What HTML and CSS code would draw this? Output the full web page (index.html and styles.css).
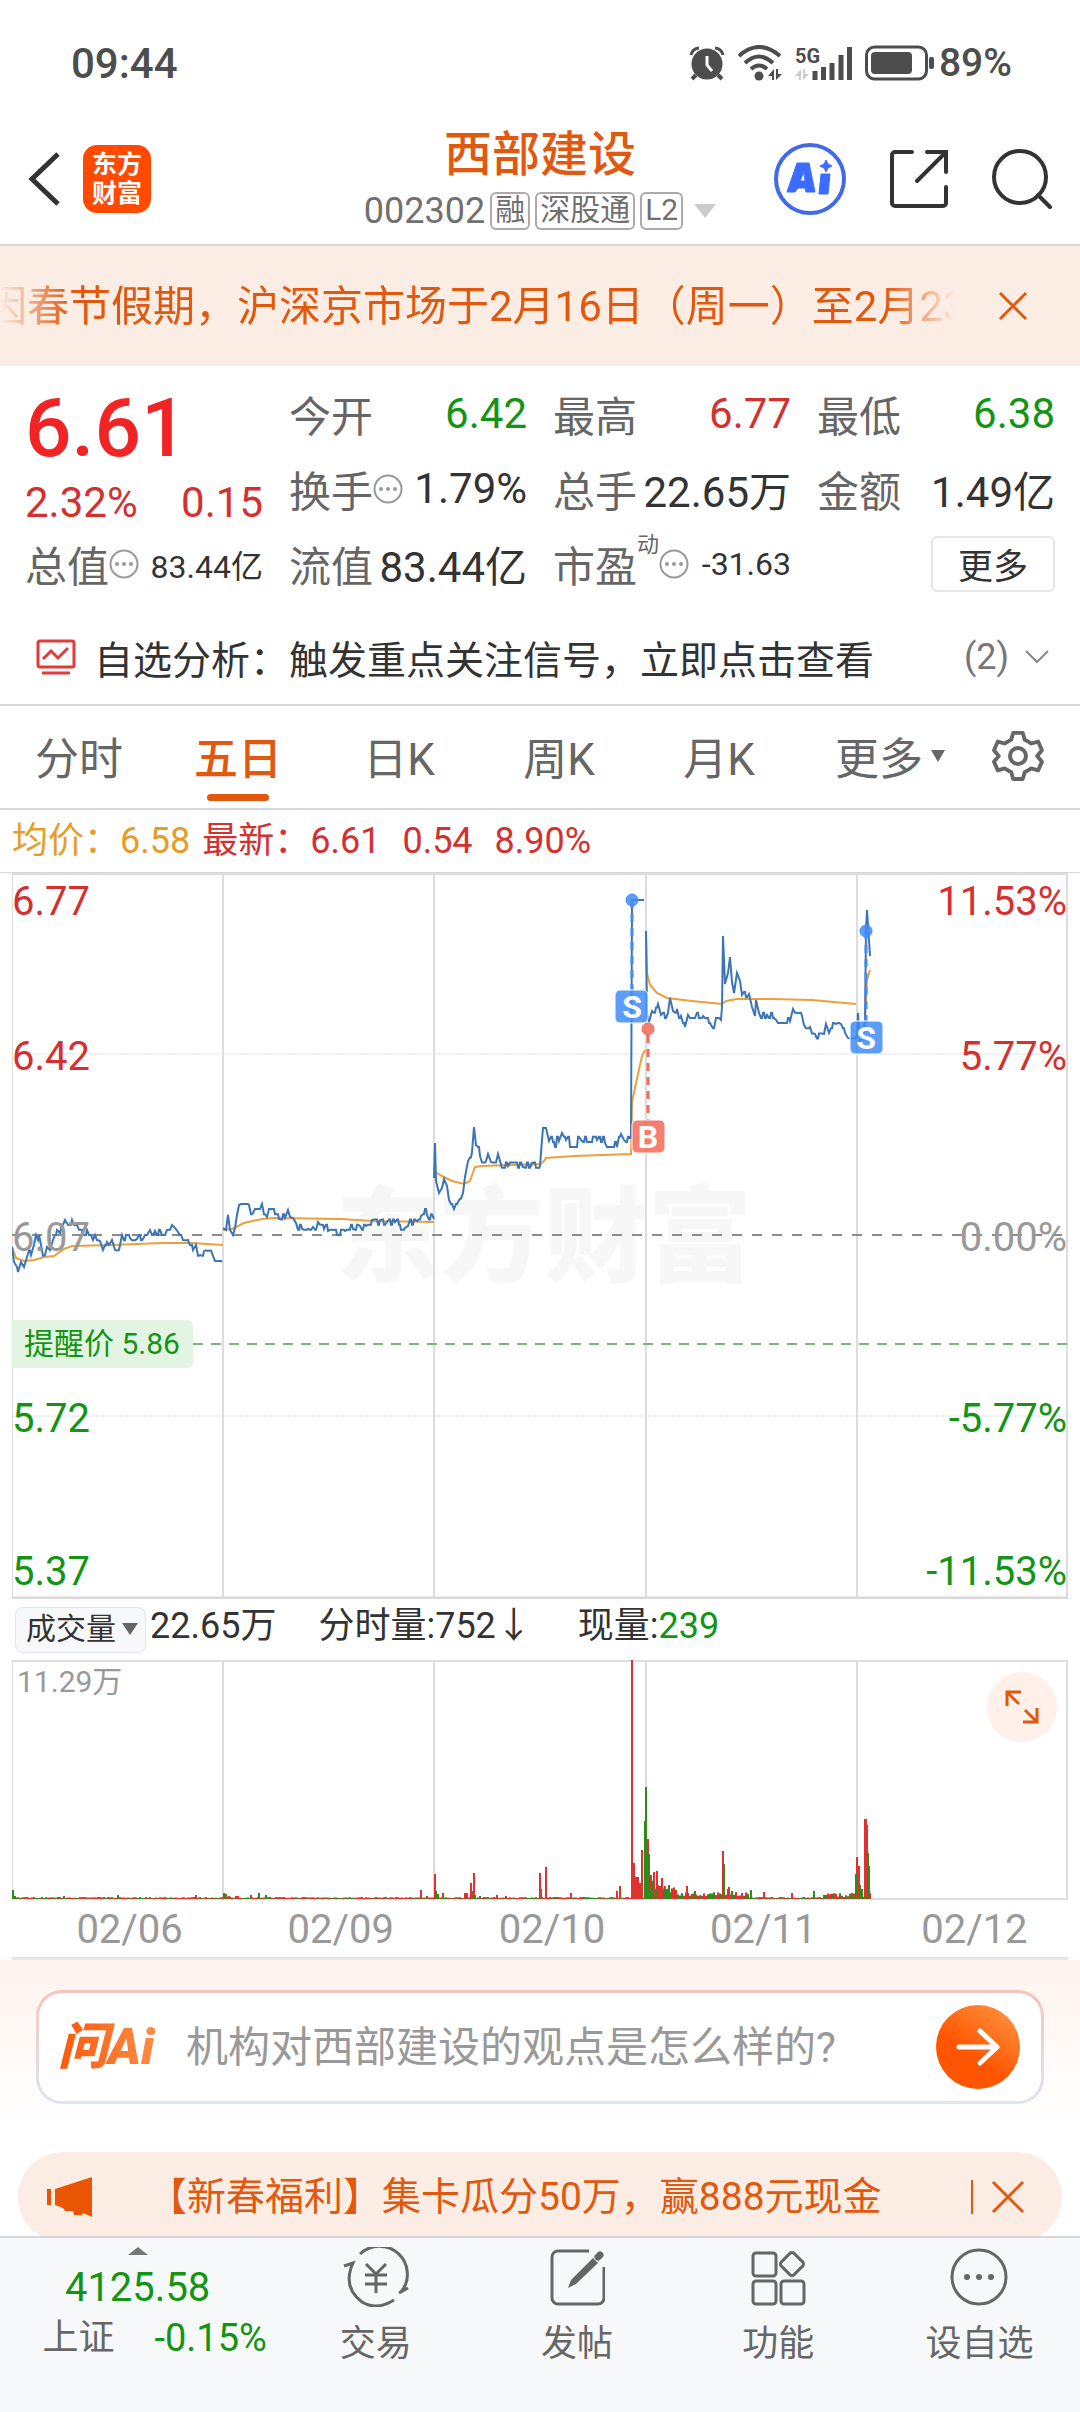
FILE: index.html
```html
<!DOCTYPE html>
<html lang="zh-CN">
<head>
    <meta charset="UTF-8">
    <meta name="viewport" content="width=device-width, initial-scale=1.0">
    <title>西部建设 002302</title>
    <link rel="stylesheet" href="styles.css">
</head>
<body>
    <div class="status-bar">
        <span>09:44</span>
        <div class="status-icons">
            <svg width="36" height="36" viewBox="0 0 36 36">
                <circle cx="18" cy="19" r="15.500" fill="#4d4d4d"/>
                <path d="M2 10a9 9 0 0 1 8-7M34 10a9 9 0 0 0-8-7" fill="none" stroke="#4d4d4d" stroke-width="3"/>
                <path d="M7 30l-4 4M29 30l4 4" stroke="#4d4d4d" stroke-width="4"/>
                <path d="M18 11v9l5 6" fill="none" stroke="#fff" stroke-width="3"/>
            </svg>
            <svg width="46" height="36" viewBox="0 0 46 36">
                <g fill="none" stroke="#4d4d4d" stroke-width="4">
                    <path d="M2 11Q22-7 43 11"/>
                    <path d="M8 18Q22 5 36 18"/>
                    <path d="M14 24Q22 17 30 24"/>
                </g>
                <circle cx="22" cy="31" r="4.500" fill="#4d4d4d"/>
                <path d="M37 24v11h-2v-4h-4zM39 24v11l6-6h-4v-5z" fill="#4d4d4d"/>
            </svg>
            <svg width="58" height="36" viewBox="0 0 58 36">
                <text class="net-label" x="0" y="18">5G</text>
                <path d="M6 24v11h-2v-4h-4zM8 24v11l6-6h-4v-5z" fill="#ccc"/>
                <path d="M20 26v9M28.500 22v13M37 18v17M46 10v25M54.500 2v33" stroke="#4d4d4d" stroke-width="5"/>
            </svg>
            <svg width="70" height="36" viewBox="0 0 70 36">
                <rect x="1.500" y="2" width="60" height="32" rx="8" fill="none" stroke="#4d4d4d" stroke-width="3"/>
                <rect x="6" y="7" width="41" height="22" rx="4" fill="#4d4d4d"/>
                <rect x="64" y="12" width="5" height="12" rx="2" fill="#4d4d4d"/>
            </svg>
            <span class="battery">89%</span>
        </div>
    </div>

    <header class="header">
        <div class="header-left">
            <button class="icon-btn" aria-label="返回">
                <svg width="34" height="56" viewBox="0 0 34 56"><path d="M30 3L4 28l26 25" fill="none" stroke="#333" stroke-width="5"/></svg>
            </button>
            <a class="app-logo" href="#">东方<br>财富</a>
        </div>
        <div class="header-title">
            <h1>西部建设</h1>
            <div class="stock-code">
                <span>002302</span>
                <span class="tag">融</span>
                <span class="tag">深股通</span>
                <span class="tag">L2</span>
                <svg width="22" height="14" viewBox="0 0 22 14"><path d="M0 0h22L11 14z" fill="#ccc"/></svg>
            </div>
        </div>
        <div class="header-right">
            <button class="icon-btn" aria-label="AI">
                <svg width="72" height="72" viewBox="0 0 72 72">
                    <circle cx="36" cy="36" r="34" fill="none" stroke="#4169e8" stroke-width="4"/>
                    <path d="M23 20h12l6 29h-9l-1-4h-7l-3 4h-8zM30 29l-4 9h5zM47 31h9l-2 20h-9zM52 17l2 4 4 2-4 2-2 4-2-4-4-2 4-2z" fill="#3c6cff" stroke="#3c6cff" stroke-width="1" stroke-linejoin="round" fill-rule="evenodd"/>
                </svg>
            </button>
            <button class="icon-btn" aria-label="分享">
                <svg width="60" height="60" viewBox="0 0 60 60">
                    <path d="M23 3H6a3 3 0 0 0-3 3v48a3 3 0 0 0 3 3h48a3 3 0 0 0 3-3V38M38 3h19v20M56 4L28 32" fill="none" stroke="#333" stroke-width="4" stroke-linecap="round"/>
                </svg>
            </button>
            <button class="icon-btn" aria-label="搜索">
                <svg width="60" height="60" viewBox="0 0 60 60">
                    <circle cx="28" cy="28" r="26" fill="none" stroke="#333" stroke-width="4"/>
                    <path d="M46 46l12 12" stroke="#333" stroke-width="4" stroke-linecap="round"/>
                </svg>
            </button>
        </div>
    </header>

    <div class="notice">
        <p class="notice-text">因春节假期，沪深京市场于2月16日（周一）至2月23日休市</p>
        <button class="icon-btn" aria-label="关闭公告">
            <svg width="30" height="30" viewBox="0 0 30 30"><path d="M2 2l26 26M28 2L2 28" stroke="#e1580e" stroke-width="3"/></svg>
        </button>
    </div>

    <section class="quote">
        <div class="quote-main">
            <div class="price">6.61</div>
            <div class="change"><span>2.32%</span><span>0.15</span></div>
        </div>
        <div class="quote-item"><span class="label">今开</span><span class="down">6.42</span></div>
        <div class="quote-item"><span class="label">最高</span><span class="up">6.77</span></div>
        <div class="quote-item"><span class="label">最低</span><span class="down">6.38</span></div>
        <div class="quote-item"><span class="label">换手<svg class="info" viewBox="0 0 30 30"><use href="#dots"/></svg></span><span>1.79%</span></div>
        <div class="quote-item"><span class="label">总手</span><span>22.65万</span></div>
        <div class="quote-item"><span class="label">金额</span><span>1.49亿</span></div>
        <div class="quote-item"><span class="label">总值<svg class="info" viewBox="0 0 30 30"><use href="#dots"/></svg></span><span class="small">83.44亿</span></div>
        <div class="quote-item"><span class="label">流值</span><span>83.44亿</span></div>
        <div class="quote-item"><span class="label">市盈<sup>动</sup><svg class="info" viewBox="0 0 30 30"><use href="#dots"/></svg></span><span class="small">-31.63</span></div>
        <div class="quote-item quote-more"><button class="more-btn">更多</button></div>
    </section>

    <svg width="0" height="0" class="defs">
        <symbol id="dots" viewBox="0 0 30 30">
            <circle cx="15" cy="15" r="13.500" fill="none" stroke="#999" stroke-width="2"/>
            <path d="M8 15h0M15 15h0M22 15h0" stroke="#999" stroke-width="4" stroke-linecap="round"/>
        </symbol>
    </svg>

    <section class="analysis">
        <svg width="40" height="36" viewBox="0 0 40 36">
            <rect x="2" y="2" width="36" height="26" rx="2" fill="none" stroke="#e03a3a" stroke-width="3"/>
            <path d="M7 20l8-8 7 7 10-10M6 34h28" fill="none" stroke="#e03a3a" stroke-width="3"/>
        </svg>
        <p>自选分析：触发重点关注信号，立即点击查看</p>
        <span class="count">(2)</span>
        <svg width="26" height="16" viewBox="0 0 26 16"><path d="M2 2l11 11L24 2" fill="none" stroke="#888" stroke-width="2"/></svg>
    </section>

    <nav class="tabs">
        <button>分时</button>
        <button class="active">五日</button>
        <button>日K</button>
        <button>周K</button>
        <button>月K</button>
        <button class="tab-more">更多<svg width="14" height="12" viewBox="0 0 14 12"><path d="M0 0h14L7 12z" fill="#666"/></svg></button>
        <button class="tab-setting" aria-label="设置">
            <svg width="52" height="52" viewBox="0 0 52 52" fill="none" stroke="#666" stroke-width="4" stroke-linejoin="round">
                <path d="M21 2h10l2 7 7 4 7-2 4 9-5 6 5 6-4 9-7-2-7 4-2 7H21l-2-7-7-4-7 2-4-9 5-6-5-6 4-9 7 2 7-4z" transform="translate(1 1) scale(.96)"/>
                <circle cx="26" cy="26" r="8"/>
            </svg>
        </button>
    </nav>

    <div class="legend">
        <span class="avg">均价：6.58</span>
        <span class="up">最新：6.61</span>
        <span class="up">0.54</span>
        <span class="up">8.90%</span>
    </div>

    <div class="chart">
        <svg viewBox="0 0 1056 726">
            <text class="watermark" x="324" y="401">东方财富</text>
            <path class="grid" d="M0 0V725M1055 0V725M211 0V725M422 0V725M634 0V725M845 0V725M0 1H1056"/>
            <path class="grid-dot" d="M0 181H1056M0 543H1056"/>
            <path class="grid-base" d="M0 725H1056"/>
            <path class="line-zero" d="M0 362H1056"/>
            <path class="line-alert" d="M181 471H1056"/>
            <g id="priceLines"></g>
            <g class="axis">
                <text class="t-up" x="0" y="42">6.77</text>
                <text class="t-up" x="0" y="197">6.42</text>
                <text class="t-flat" x="0" y="378">6.07</text>
                <text class="t-down" x="0" y="559">5.72</text>
                <text class="t-down" x="0" y="712">5.37</text>
            </g>
            <g class="axis axis-right">
                <text class="t-up" x="1055" y="42">11.53%</text>
                <text class="t-up" x="1055" y="197">5.77%</text>
                <text class="t-flat" x="1055" y="378">0.00%</text>
                <text class="t-down" x="1055" y="559">-5.77%</text>
                <text class="t-down" x="1055" y="712">-11.53%</text>
            </g>
            <path d="M0 447h175a6 6 0 0 1 6 6v36a6 6 0 0 1-6 6H0z" fill="#e3f4e3"/>
            <text class="alert-text" x="12" y="481">提醒价 5.86</text>
            <g class="mark-sell">
                <path d="M620 27V120M854 58V150"/>
                <circle cx="620" cy="27" r="6"/>
                <circle cx="854" cy="58" r="6"/>
                <rect x="603" y="117" width="33" height="33" rx="5"/>
                <rect x="838" y="148" width="33" height="33" rx="5"/>
            </g>
            <g class="mark-buy">
                <path d="M636 162V248"/>
                <circle cx="636" cy="156" r="6"/>
                <rect x="620" y="247" width="33" height="33" rx="5"/>
            </g>
            <g class="mark-text">
                <text x="620" y="145">S</text>
                <text x="854" y="176">S</text>
                <text x="636" y="275">B</text>
            </g>
        </svg>
    </div>

    <div class="volume-head">
        <label class="picker">
            <select aria-label="指标">
                <option>成交量</option>
            </select>
            <svg width="16" height="12" viewBox="0 0 16 12"><path d="M0 0h16L8 12z" fill="#666"/></svg>
        </label>
        <span class="vol-total">22.65万</span>
        <span class="vol-minute">分时量:752↓</span>
        <span>现量:<span class="down">239</span></span>
    </div>

    <div class="chart volume">
        <svg viewBox="0 0 1056 240">
            <path class="grid" d="M0 0V239M1055 0V239M211 0V239M422 0V239M634 0V239M845 0V239M0 1H1056M0 239H1056"/>
            <text class="vol-max" x="5" y="32">11.29万</text>
            <g id="volumeBars"></g>
        </svg>
        <button class="expand" aria-label="全屏">
            <svg width="36" height="36" viewBox="0 0 36 36" fill="none" stroke="#e1580e" stroke-width="3">
                <path d="M3 17V3h14M3 3l12 12M33 19v14H19M33 33L21 21"/>
            </svg>
        </button>
    </div>
    <div class="dates">
        <span>02/06</span><span>02/09</span><span>02/10</span><span>02/11</span><span>02/12</span>
    </div>

    <section class="ask">
        <form class="ask-box">
            <svg class="ask-mark" width="100" height="54" viewBox="0 0 100 54">
                <defs>
                    <linearGradient id="askFill" x1="0" x2="1"><stop offset="0" stop-color="#f95a0c"/><stop offset="1" stop-color="#ff8b45"/></linearGradient>
                </defs>
                <text class="ask-logo" x="0" y="44">问Ai</text>
            </svg>
            <input type="text" placeholder="机构对西部建设的观点是怎么样的?" aria-label="提问">
            <button class="ask-send" type="button" aria-label="发送">
                <svg width="44" height="40" viewBox="0 0 44 40"><path d="M3 20h37M24 4l17 16-17 16" fill="none" stroke="#fff" stroke-width="5" stroke-linecap="round" stroke-linejoin="round"/></svg>
            </button>
        </form>
    </section>

    <div class="promo">
        <svg width="48" height="42" viewBox="0 0 48 42"><path d="M1 13h4v16H1zM9 13L46 1v40l-9-4-1 2h-8l-1-4H19l-2-3-8-3z" fill="#ea5504"/></svg>
        <a href="#">【新春福利】集卡瓜分50万，赢888元现金</a>
        <button class="icon-btn" aria-label="关闭">
            <svg width="34" height="34" viewBox="0 0 34 34"><path d="M2 2l30 30M32 2L2 32" stroke="#e1580e" stroke-width="3"/></svg>
        </button>
    </div>

    <nav class="bottom-nav">
        <a class="index" href="#">
            <svg width="20" height="8" viewBox="0 0 20 8"><path d="M0 8h20L10 0z" fill="#777"/></svg>
            <span class="index-value">4125.58</span>
            <span class="index-row"><span>上证</span><span class="down">-0.15%</span></span>
        </a>
        <a href="#">
            <svg width="66" height="60" viewBox="0 0 66 60" fill="none" stroke="#666" stroke-width="3">
                <path d="M17 7A28 28 0 0 1 58 45M1 19l9-3Q-1 40 19 55Q34 64 51 53M56 46l9-5"/>
                <path d="M23 17l10 10 10-10M33 27v19M22 28h22M22 37h22"/>
            </svg>
            <span>交易</span>
        </a>
        <a href="#">
            <svg width="56" height="60" viewBox="0 0 56 60" fill="none" stroke="#666" stroke-width="3">
                <path d="M40 4H9a6 6 0 0 0-6 6v41a6 6 0 0 0 6 6h40a6 6 0 0 0 6-6V20"/>
                <path d="M44 11l5 5-22 21-8 4 3-8z" fill="#666" stroke="none"/>
                <path d="M49 10l2-2" stroke-width="7" stroke-linecap="round"/>
            </svg>
            <span>发帖</span>
        </a>
        <a href="#">
            <svg width="56" height="60" viewBox="0 0 56 60" fill="none" stroke="#666" stroke-width="3">
                <rect x="3" y="6" width="23" height="23" rx="3"/>
                <rect x="3" y="34" width="23" height="23" rx="3"/>
                <rect x="31" y="34" width="23" height="23" rx="3"/>
                <rect x="33" y="8" width="18" height="18" rx="3" transform="rotate(45 42 17)"/>
            </svg>
            <span>功能</span>
        </a>
        <a href="#">
            <svg width="60" height="60" viewBox="0 0 60 60">
                <circle cx="30" cy="30" r="27" fill="none" stroke="#666" stroke-width="3"/>
                <path d="M18 30h0M30 30h0M42 30h0" stroke="#666" stroke-width="6" stroke-linecap="round"/>
            </svg>
            <span>设自选</span>
        </a>
    </nav>

    <script>
        const NS = 'http://www.w3.org/2000/svg';
        const priceLines = document.getElementById('priceLines');
        const volumeBars = document.getElementById('volumeBars');
        const tick = 5.17; // height of 0.01 yuan

        // x, y pairs, one row per trading day
        const prices = [
            [0,374, 2,389, 5,394, 6,399, 9,389, 12,394, 15,384, 19,382, 22,372, 24,362, 26,367, 27,362, 29,372, 33,382, 35,374, 38,377, 41,367, 45,357, 48,360, 53,347, 56,352, 60,347, 62,352, 65,352, 71,362, 75,357, 79,362, 81,367, 83,362, 88,368, 91,377, 95,369, 97,372, 100,367, 103,377, 107,377, 110,362, 118,365, 125,366, 131,366, 135,362, 138,357, 143,358, 150,362, 155,357, 160,352, 163,355, 166,359, 171,367, 176,367, 180,372, 181,377, 184,372, 188,382, 192,378, 196,378, 201,383, 206,388, 210,389],
            [211,355, 214,357, 216,342, 218,357, 221,362, 223,355, 225,342, 227,332, 237,332, 241,340, 245,336, 250,331, 255,344, 259,336, 267,346, 273,345, 276,337, 278,344, 281,345, 284,350, 290,356, 296,356, 301,354, 306,349, 311,352, 312,356, 316,358, 321,357, 325,362, 333,358, 341,356, 348,353, 354,353, 360,347, 368,347, 375,349, 383,349, 393,355, 396,353, 405,348, 409,343, 415,342, 422,346],
            [422,305, 423,270, 424,308, 427,320, 430,315, 432,306, 435,313, 437,327, 442,336, 446,329, 451,320, 453,304, 456,288, 460,279, 462,254, 464,272, 468,283, 474,288, 476,281, 479,289, 486,281, 488,288, 496,293, 511,294, 520,290, 527,295, 528,293, 530,267, 531,255, 534,255, 537,268, 547,268, 550,260, 554,267, 562,274, 569,267, 585,267, 593,270, 605,274, 609,261, 612,267, 618,265, 619,265, 620,27, 632,27],
            [634,58, 635,140, 637,149, 640,138, 646,131, 649,142, 656,140, 658,125, 661,138, 665,136, 669,143, 673,154, 676,142, 683,145, 691,143, 699,152, 704,145, 709,147, 710,134, 711,63, 713,111, 716,100, 718,84, 720,109, 722,120, 725,100, 728,108, 730,122, 737,121, 740,134, 743,143, 744,127, 747,140, 755,142, 764,147, 778,148, 781,136, 786,140, 790,143, 792,152, 798,154, 803,161, 812,161, 814,151, 817,160, 824,151, 829,151, 833,160, 836,165, 844,163],
            [845,165, 846,140, 848,168, 851,165, 853,147, 854,58, 855,37, 857,68, 858,83]
        ];
        const averages = [
            [0,374, 4,385, 12,388, 22,387, 32,384, 42,383, 52,376, 60,373, 100,372, 150,370, 180,370, 211,372],
            [211,357, 220,356, 232,350, 250,346, 262,345, 330,346, 360,348, 422,349],
            [423,299, 430,303, 440,308, 452,311, 458,308, 463,294, 470,293, 500,292, 528,291, 532,288, 534,285, 562,283, 619,281, 620,229, 626,201, 630,183, 633,177],
            [634,58, 635,100, 638,112, 645,120, 655,125, 680,128, 710,131, 714,128, 725,126, 760,126, 800,127, 844,131],
            [852,160, 853,147, 855,107, 858,97]
        ];
        // x, height, 1 = up / 0 = down
        const volumes = [
            [1,9,0], [3,3,0], [52,3,1], [106,4,0], [184,4,1], [212,6,0], [214,5,1], [217,3,0], [224,3,1], [226,3,1], [239,4,1], [247,6,0], [254,4,0],
            [409,9,1], [415,3,1], [423,25,1], [424,8,0], [426,5,0], [431,6,1], [453,6,1], [455,6,1], [459,16,1], [460,8,1], [462,26,1], [463,4,0], [468,3,0], [485,4,1], [494,3,1],
            [528,26,1], [529,10,1], [534,32,1], [559,6,1], [605,8,1], [608,13,1], [620,239,1], [622,36,1], [624,22,1], [626,22,1], [628,12,1], [630,49,1],
            [633,78,0], [634,112,0], [636,60,1], [637,45,0], [639,24,1], [641,18,0], [642,27,1], [645,28,1], [648,13,1], [650,21,1], [653,13,1], [657,14,0], [663,9,1],
            [675,13,1], [683,8,0], [711,48,1], [712,35,0], [716,10,1], [717,12,1], [720,8,0], [724,7,1], [736,5,0], [739,9,0], [752,7,1], [780,6,1], [802,8,0], [819,5,1], [840,6,1],
            [844,25,0], [845,42,1], [847,33,1], [848,14,0], [850,10,0], [853,80,1], [854,80,1], [855,74,1], [856,46,0], [857,33,0]
        ];

        let seed = 7;
        function random() {
            seed = (seed * 16807) % 2147483647;
            return seed / 2147483647;
        }

        function addPath(d, className) {
            const path = document.createElementNS(NS, 'path');
            path.setAttribute('d', d);
            path.setAttribute('class', className);
            return path;
        }

        // fills the gap between two points with one-tick steps
        function pricePath(row) {
            let d = `M${row[0]} ${row[1]}`;
            for (let i = 2; i < row.length; i += 2) {
                const [x0, y0, x1, y1] = row.slice(i - 2, i + 2);
                for (let x = x0 + 2; x < x1 - 1 && y0 > 30; x += 2) {
                    const y = y0 + (y1 - y0) * (x - x0) / (x1 - x0) + (random() - 0.5) * 9;
                    const level = 362 + Math.round((y - 362) / tick) * tick;
                    d += `L${x} ${level.toFixed(1)}H${x + 1}`;
                }
                d += `L${x1} ${y1}`;
            }
            return d;
        }

        averages.forEach(row => {
            let d = `M${row[0]} ${row[1]}`;
            for (let i = 2; i < row.length; i += 2) {
                d += `L${row[i]} ${row[i + 1]}`;
            }
            priceLines.appendChild(addPath(d, 'line-avg'));
        });
        prices.forEach(row => priceLines.appendChild(addPath(pricePath(row), 'line-price')));

        const bars = ['', ''];
        for (let x = 0; x < 859; x += 2) {
            let h = 1 + random();
            if (x > 620 && x < 632) h = 10 + random() * 12;
            if (x > 634 && x < 665) h = 6 + random() * 8;
            if (x >= 665 && x < 735) h = 3 + random() * 4;
            if (x > 810) h = 2 + random() * 4;
            const up = random() > 0.4 || (x > 610 && x < 632) ? 1 : 0;
            bars[up] += `M${x} 239v-${h.toFixed(1)}`;
        }
        volumes.forEach(([x, h, up]) => {
            bars[up] += `M${x} 239v-${h}`;
        });
        volumeBars.appendChild(addPath(bars[1], 'bar-up'));
        volumeBars.appendChild(addPath(bars[0], 'bar-down'));
    </script>
</body>
</html>
```
FILE: styles.css
```css
* {
    box-sizing: border-box;
}

body {
    margin: 0;
    padding-bottom: 170px;
    background-color: #fff;
    color: #333;
    font-family: Roboto, "Noto Sans CJK SC", sans-serif;
    font-size: 36px;
}

h1, p {
    margin: 0;
    font-weight: 400;
}

svg {
    display: block;
    flex: none;
}

button, input, select {
    padding: 0;
    border: none;
    background: none;
    color: inherit;
    font-family: inherit;
    font-size: inherit;
}

a {
    color: inherit;
    text-decoration: none;
}

.defs {
    position: absolute;
}

.up {
    color: #d43030;
}

.down {
    color: #149414;
}

/* status bar */
.status-bar {
    display: flex;
    justify-content: space-between;
    align-items: center;
    height: 106px;
    padding: 20px 68px 0 71px;
    color: #4d4d4d;
    font-size: 42px;
    font-weight: 500;
}

.status-icons {
    display: flex;
    align-items: center;
    gap: 12px;
}

.battery {
    margin-left: -8px;
    font-size: 39px;
}

.net-label {
    font-family: Roboto, sans-serif;
    font-size: 20px;
    font-weight: 700;
    fill: #4d4d4d;
}

/* header */
.header {
    display: grid;
    grid-template-columns: 1fr auto 1fr;
    align-items: center;
    height: 140px;
    padding: 8px 28px 0;
    border-bottom: 2px solid #d8d8d8;
}

.header-left,
.header-right {
    display: flex;
    align-items: center;
}

.header-left {
    gap: 21px;
}

.header-right {
    justify-content: flex-end;
    gap: 43px;
}

.app-logo {
    width: 68px;
    height: 68px;
    padding-top: 5px;
    border-radius: 14px;
    background-color: #ff4a00;
    color: #fff;
    font-size: 25px;
    font-weight: 700;
    line-height: 29px;
    text-align: center;
}

.header-title {
    padding-top: 4px;
    text-align: center;
}

.header-title h1 {
    color: #e1580e;
    font-size: 48px;
    font-weight: 500;
    line-height: 60px;
}

.stock-code {
    display: flex;
    justify-content: center;
    align-items: center;
    gap: 5px;
    height: 52px;
    color: #707070;
}

.tag {
    height: 38px;
    padding: 0 3px;
    border: 2px solid #aaa;
    border-radius: 6px;
    font-size: 30px;
    line-height: 32px;
}

.stock-code svg {
    margin-left: 6px;
}

/* notice */
.notice {
    display: flex;
    justify-content: space-between;
    align-items: center;
    height: 120px;
    padding-right: 52px;
    background-color: #fcede4;
    color: #e1580e;
}

.notice-text {
    width: 955px;
    padding-bottom: 8px;
    overflow: hidden;
    font-size: 42px;
    text-indent: -15px;
    white-space: nowrap;
    mask-image: linear-gradient(90deg, transparent, #000 70px, #000 calc(100% - 70px), transparent);
}

/* quote */
.quote {
    display: grid;
    grid-template-columns: repeat(4, 1fr);
    grid-auto-rows: 75px;
    column-gap: 26px;
    padding: 10px 25px 2px;
    font-size: 42px;
}

.quote-main {
    grid-row: span 2;
    padding-top: 2px;
}

.price {
    color: #f02424;
    font-size: 82px;
    font-weight: 500;
    line-height: 100px;
}

.change {
    display: flex;
    justify-content: space-between;
    color: #d43030;
    line-height: 50px;
}

.quote-item {
    display: flex;
    justify-content: space-between;
    align-items: center;
    white-space: nowrap;
}

.label {
    display: flex;
    align-items: center;
    color: #666;
}

.label sup {
    align-self: flex-start;
    font-size: 22px;
    line-height: 24px;
}

.info {
    width: 30px;
    height: 30px;
}

.small {
    font-size: 32px;
}

.quote-more {
    justify-content: flex-end;
}

.more-btn {
    width: 124px;
    height: 56px;
    padding-bottom: 4px;
    border: 2px solid #e6e6e6;
    border-radius: 6px;
    font-size: 35px;
}

/* analysis */
.analysis {
    display: flex;
    align-items: center;
    height: 103px;
    padding: 6px 30px 0 36px;
    border-bottom: 2px solid #d8d8d8;
    font-size: 39px;
}

.analysis p {
    flex: 1;
    margin-left: 18px;
}

.count {
    margin-right: 15px;
    color: #777;
    font-size: 36px;
}

/* tabs */
.tabs {
    display: grid;
    grid-template-columns: 158fr 160fr 162fr 158fr 162fr 180fr 76fr;
    height: 104px;
    padding-right: 24px;
    border-bottom: 2px solid #d8d8d8;
    color: #666;
    font-size: 44px;
}

.tabs button {
    display: flex;
    flex-direction: column;
    justify-content: center;
    align-items: center;
    padding-bottom: 2px;
}

.tabs .active {
    position: relative;
    color: #e1580e;
    font-weight: 500;
}

.active::after {
    content: "";
    position: absolute;
    bottom: 7px;
    width: 62px;
    height: 7px;
    border-radius: 4px;
    background-color: #e1580e;
}

.tabs .tab-more {
    flex-direction: row;
    gap: 8px;
}

/* chart */
.legend {
    display: flex;
    align-items: center;
    gap: 22px;
    height: 63px;
    padding: 0 12px;
    border-bottom: 1px solid #d8d8d8;
    line-height: 60px;
}

.legend .avg {
    margin-right: -10px;
    color: #e89c28;
}

.chart {
    position: relative;
    padding: 0 12px;
}

.chart svg {
    width: 100%;
}

.chart text {
    font-family: Roboto, "Noto Sans CJK SC", sans-serif;
}

.chart .watermark {
    font-size: 104px;
    font-weight: 900;
    fill: #f7f7f7;
}

.grid {
    fill: none;
    stroke: #ddd;
    stroke-width: 2;
}

.grid-dot {
    stroke: #ddd;
    stroke-dasharray: 2 1;
}

.grid-base {
    stroke: #d8d8d8;
    stroke-width: 3;
}

.line-zero {
    stroke: #8c8c8c;
    stroke-width: 2;
    stroke-dasharray: 10 10;
}

.line-alert {
    stroke: #7fb583;
    stroke-width: 2;
    stroke-dasharray: 10 8;
}

.line-price,
.line-avg {
    fill: none;
    stroke: #3c75b5;
    stroke-width: 2;
}

.line-avg {
    stroke: #eaa03c;
}

.axis text {
    font-size: 40px;
}

.axis-right {
    text-anchor: end;
}

.t-up {
    fill: #d43030;
}

.t-down,
.alert-text {
    fill: #149414;
}

.t-flat {
    fill: #999;
}

.alert-text {
    font-size: 30px;
}

.mark-sell,
.mark-buy {
    fill: #3f8cf8;
    fill-opacity: .85;
    stroke: #3f8cf8;
}

.mark-buy {
    fill: #f5695a;
    stroke: #f5695a;
}

.mark-sell path,
.mark-buy path {
    stroke-width: 3;
    stroke-dasharray: 8 6;
}

.mark-sell rect,
.mark-buy rect {
    stroke: #fff;
    stroke-width: 1;
}

.mark-text text {
    font-size: 32px;
    font-weight: 700;
    text-anchor: middle;
    fill: #fff;
}

/* volume */
.volume-head {
    display: flex;
    align-items: center;
    height: 61px;
    padding: 0 15px;
    line-height: 44px;
}

.volume-head > span {
    padding-bottom: 8px;
}

.picker {
    display: flex;
    align-items: center;
    gap: 6px;
    height: 46px;
    padding: 0 7px 2px 10px;
    border: 1px solid #e2e4e8;
    border-radius: 8px;
    background-color: #f7f8fa;
    font-size: 30px;
}

.picker select {
    appearance: none;
}

.vol-total {
    margin: 0 42px 0 4px;
}

.vol-minute {
    margin-right: 46px;
}

.vol-max {
    font-size: 30px;
    fill: #999;
}

.bar-up,
.bar-down {
    stroke: #e03030;
    stroke-width: 2;
}

.bar-down {
    stroke: #2f8a1c;
}

.expand {
    position: absolute;
    top: 12px;
    right: 23px;
    display: flex;
    justify-content: center;
    align-items: center;
    width: 70px;
    height: 70px;
    border-radius: 50%;
    background-color: #fff1ea;
}

.expand svg {
    width: 36px;
}

.dates {
    display: grid;
    grid-template-columns: repeat(5, 1fr);
    height: 60px;
    margin: 0 12px;
    border-bottom: 3px solid #e5e5e5;
    color: #999;
    font-size: 40px;
    line-height: 60px;
    text-align: center;
}

.dates span {
    padding-left: 24px;
}

/* ask */
.ask {
    padding: 30px 36px 48px;
    background: linear-gradient(#fff3ee, #fff 166px);
}

.ask-box {
    display: flex;
    align-items: center;
    height: 114px;
    padding: 0 21px 0 19px;
    border: 3px solid transparent;
    border-radius: 26px;
    background: linear-gradient(#fff, #fff) padding-box, linear-gradient(#f5c4bb, #dfe6f1) border-box;
}

.ask-mark {
    overflow: visible;
}

.ask-logo {
    font-family: Roboto, "Noto Sans CJK SC", sans-serif;
    font-size: 50px;
    font-style: italic;
    font-weight: 900;
    fill: url(#askFill);
}

.ask-box input {
    flex: 1;
    min-width: 0;
    margin: 0 28px;
    outline: none;
    font-size: 42px;
}

.ask-box input::placeholder {
    color: #999;
}

.ask-send {
    display: flex;
    justify-content: center;
    align-items: center;
    width: 84px;
    height: 84px;
    border-radius: 50%;
    background: linear-gradient(215deg, #ff9a48, #ff5500 60%);
}

/* promo */
.promo {
    display: flex;
    align-items: center;
    height: 90px;
    margin: 0 18px;
    padding: 0 37px 0 28px;
    border-radius: 45px;
    background-color: #fcede4;
    color: #e1580e;
    font-size: 39px;
}

.promo a {
    flex: 1;
    margin-left: 54px;
    padding-bottom: 8px;
}

.promo button {
    padding-left: 18px;
    border-left: 2px solid #e1580e;
}

/* bottom nav */
.bottom-nav {
    position: fixed;
    right: 0;
    bottom: 0;
    left: 0;
    display: grid;
    grid-template-columns: 275fr 201fr 201fr 201fr 201fr;
    height: 176px;
    border-top: 2px solid #d3d6da;
    background-color: #f7f8fa;
    color: #666;
}

.bottom-nav a {
    display: flex;
    flex-direction: column;
    align-items: center;
    gap: 12px;
    padding-top: 9px;
    line-height: 50px;
}

.bottom-nav .index {
    gap: 0;
}

.index-value {
    margin-top: 8px;
    color: #149414;
    font-size: 40px;
}

.index-row {
    display: flex;
    gap: 40px;
    padding-left: 34px;
}

.index-row .down {
    font-size: 38px;
}
```
